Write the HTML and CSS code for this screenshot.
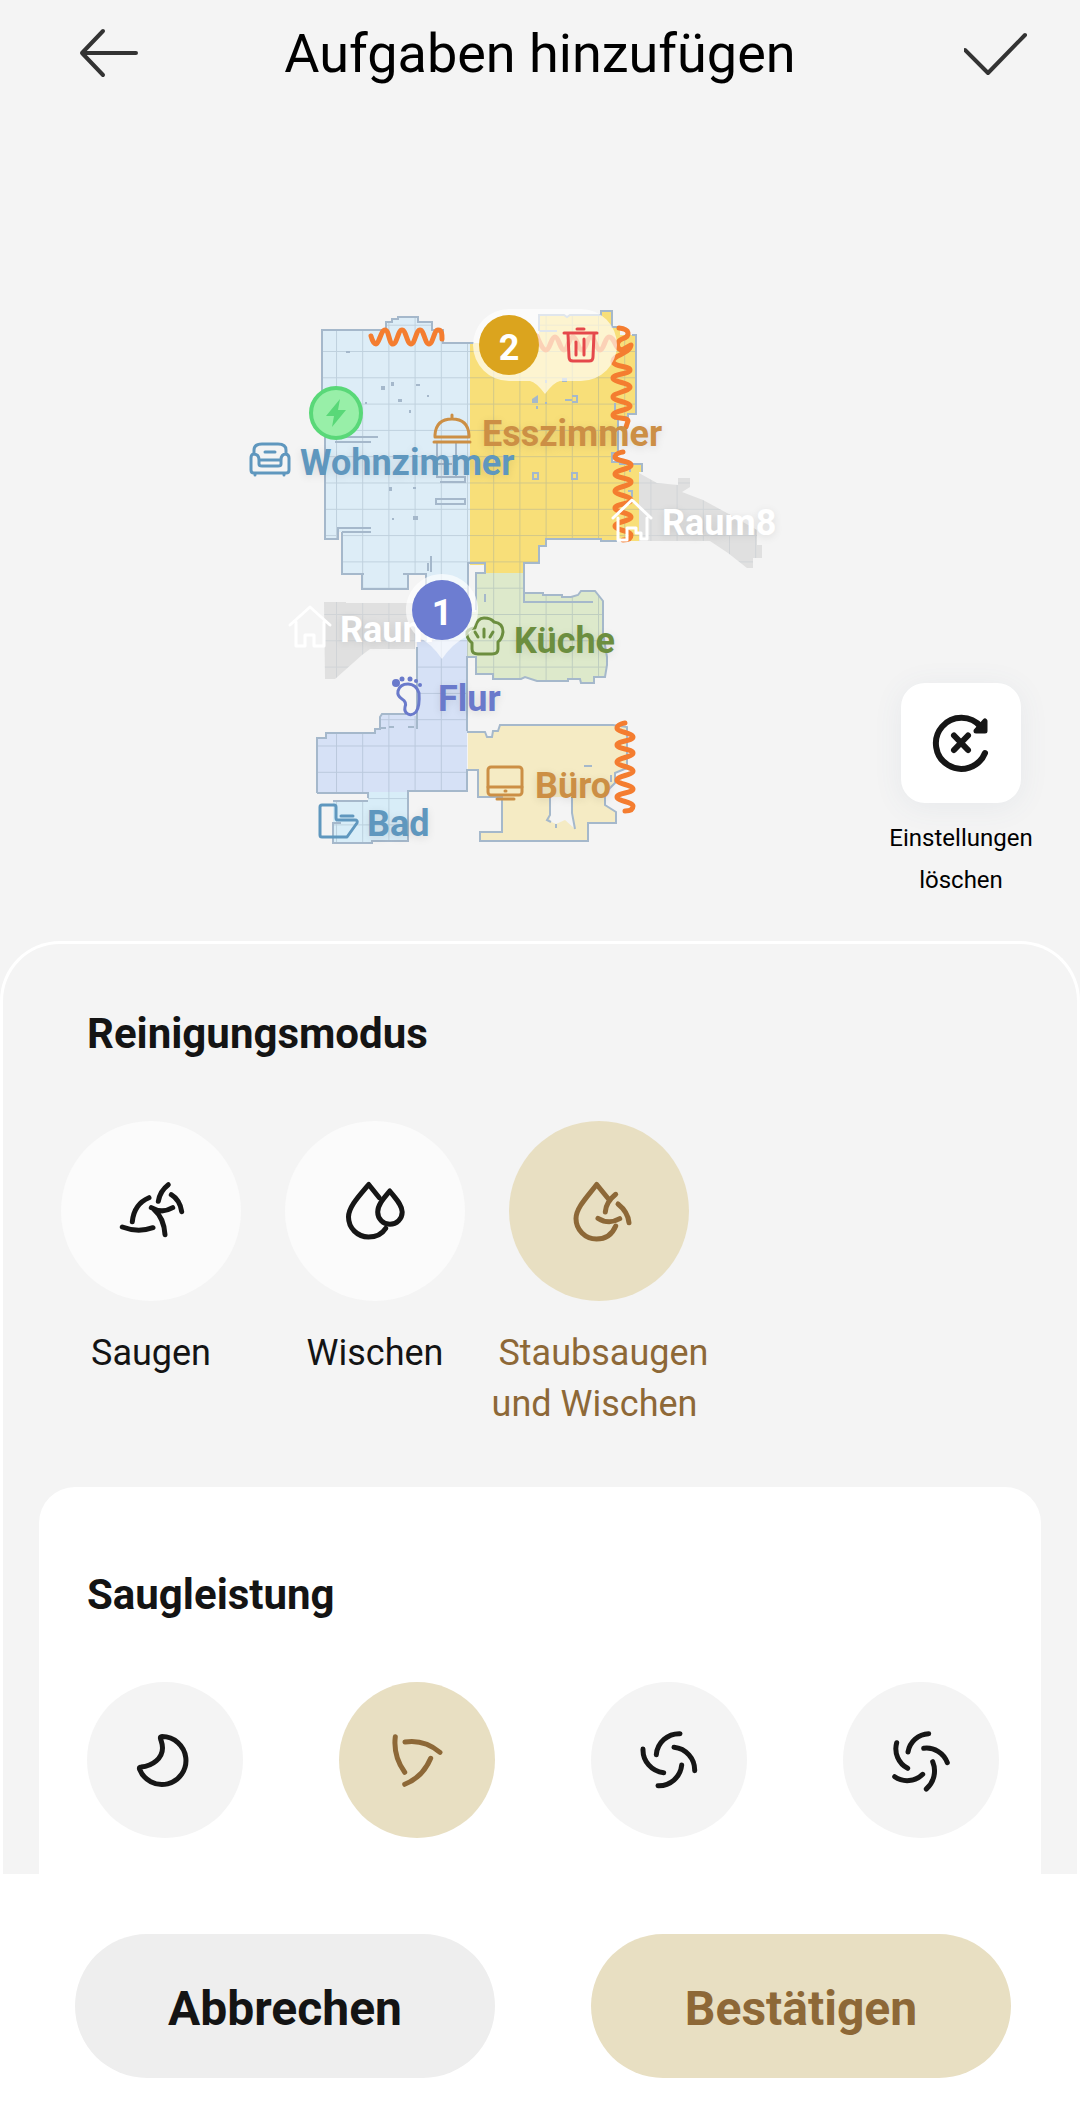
FILE: index.html
```html
<!DOCTYPE html>
<html lang="de">
<head>
  <meta charset="UTF-8" />
  <meta name="viewport" content="width=device-width, initial-scale=1" />
  <title>Aufgaben hinzufügen</title>
  <link rel="stylesheet" href="styles.css">
</head>
<body>

  <header class="topbar">
    <button class="icon-btn" aria-label="Zurück">
      <svg width="64" height="56" viewBox="0 0 64 56"><path d="M58 27H4M25 5L4 27l21 22" /></svg>
    </button>
    <h1>Aufgaben hinzufügen</h1>
    <button class="icon-btn" aria-label="Fertig">
      <svg width="64" height="56" viewBox="0 0 64 56"><path d="M1 24l23 23L61 9" /></svg>
    </button>
  </header>

  <main>
    <section class="map-area">
      <svg class="map" viewBox="240 290 600 580" role="img" aria-label="Karte">
        <defs>
          <pattern id="grid" x="336" y="351" width="26.2" height="26.3" patternUnits="userSpaceOnUse">
            <path d="M0 .5H27M.5 0V27" stroke="#8095a8" stroke-opacity=".32" fill="none" />
          </pattern>
          <path id="wohn" d="M322 330H386V322H392V319H398V317H418V322H432V330H443V343H470V563H468V645H426V574H408V589H362V574H342V532H338V539H325V437L322 395Z" />
          <path id="ess" d="M470 343H539V315H564L567 317L570 315H601V311H612V327H620V335H636V414H628V417H618V453H612V462H620V464H642V472H639V541H601V539H546V546H539V563H524V573H486V565H470Z" />
          <path id="kueche" d="M476 573H524V593H543V595H562V597H571L578 595L581 591H595L603 601V633L607 657V665L605 677H594V683H581L580 679H568V681H537L525 677L521 679H493V674H476V657H467V612H476Z" />
          <path id="flur" d="M417 640H467V791H408V792H368V793H317V738H326V733H375V729H380V717L382 714H408L417 716Z" />
          <path id="bad" d="M368 792H408V841H372V843H333V801H368Z" />
          <path id="buero" d="M468 732H485L487 737H492L493 731H498L500 725H613L627 727V768L615 773V783L605 793V805L616 812V823H588V841H480V832H502V797H478V770H468Z" />
          <path id="raum7" d="M324 602H346V603H415V649H370L362 655L335 679H325Z" />
          <path id="raum8" d="M639 473L657 483L678 485V478H690V487L682 492L703 500L727 513L757 530V545H762V558H753V568H747L728 553L710 541H617V530Z" />
        </defs>

        <!-- rooms -->
        <use href="#raum7" fill="#e0e0e0" /><use href="#raum7" fill="url(#grid)" opacity=".5" />
        <use href="#raum8" fill="#e0e0e0" /><use href="#raum8" fill="url(#grid)" opacity=".5" />
        <use href="#wohn" fill="#ddedf7" /><use href="#wohn" fill="url(#grid)" />
        <use href="#ess" fill="#f8df79" /><use href="#ess" fill="url(#grid)" />
        <use href="#kueche" fill="#dde9cb" /><use href="#kueche" fill="url(#grid)" />
        <use href="#bad" fill="#d8edf8" /><use href="#bad" fill="url(#grid)" />
        <use href="#flur" fill="#d6e1f6" /><use href="#flur" fill="url(#grid)" />
        <use href="#buero" fill="#f5ebc4" />

        <!-- walls -->
        <g class="walls">
          <path d="M322 398V330H386V322H392V319H398V317H418V322H432V330H443V343H474" />
          <path d="M325 437V539H338V528H371M342 532H371M342 532V574H364M362 574V589H408V574H403M408 574H426V592" />
          <path d="M539 331V315H564L567 317L570 315H601V311H612V327H620M632 335H636V414H628V417H618V453H612V462H620V464H642V472" />
          <path d="M617 541H601V539H546V546H539V563H524V602H593M524 593H543V595H562V597H571L578 595L581 591H595L603 601V633L607 657V665L605 677H594V683H581L580 679H568V681H537L525 677L521 679H493V674H476V657H467V731" />
          <path d="M468 600V563H485V573H476V610M485 594V602" />
          <path d="M417 647V729M408 727H414M317 793V738H326V733H375V729H380V717L382 714H406M317 793H368V798M467 769V791H408V841H372V843H333V823H341M333 801H368" />
          <path d="M467 732H485L487 737H492L493 731H498L500 725H613L627 727V768L615 773V783L605 793V805L616 812V823H588V841H480V832H502V797H478V770H467" />
          <path d="M540 331H557M335 437H378M335 442H371" />
          <path d="M437 443V477H465V482H440M456 443V477M437 464H452M436 499H465V504H436ZM431 556V572M428 563V571" />
          <path d="M533 473H538V479H533ZM572 473H577V479H572ZM572 396H577V402H572M565 400H572M615 403V420M630 465V472M628 491H632V497" />
          <path d="M380 728H386M389 727H394M584 766H592M611 775V782" />
        </g>
        <path d="M550 797H572L573 813L575 829L565 820L556 824L547 820H550Z" fill="#f4f4f4" />
        <path d="M550 797V815L547 820L551 822M572 797V813L575 829M556 824V828" class="walls" />
        <g fill="#a5b8cb">
          <path d="M346 351h4v2h-4zM381 386h4v4h-4zM387 386h4v-4h3v4h-2zM416 384h4v2h-4zM398 399h4v3h-4zM427 395h2v2h-2zM409 410h2v3h-2zM365 402h2v2h-2zM389 487h3v4h-3zM413 487h3v2h-3zM392 518h2v2h-2zM413 516h5v4h-5z" />
          <path d="M532 399l6-4v8h-6zM536 406h2v3h-2zM562 378h5v4h-5zM545 380h2v3h-2zM545 402h2v2h-2z" />
        </g>

        <!-- carpets / curtains -->
        <g class="zigzag">
          <path d="M371 336S373 344 376 344S381 330 385 330S389 344 393 344S398 330 402 330S407 344 411 344S416 330 420 330S425 344 429 344S434 330 438 330S442 334 442 339" />
          <path d="M537 336S542 350 546 350S551 337 555 337S560 350 564 350S569 337 573 337S578 350 582 350S587 337 591 337S596 350 600 350S605 337 609 337S614 342 617 347" />
          <path d="M619 328C630 329 631 336 622 339C615 342 617 350 622 350L631 345C630 354 613 355 613 361S630 366 630 370S613 374 613 378S630 383 630 387S613 393 613 397S630 402 630 406S613 411 613 415S628 417 628 421L626 427" />
          <path d="M623 452S615 453 615 457S631 461 631 465S615 470 615 474S631 478 631 482S615 487 615 491S631 496 631 500S615 504 615 508S631 513 631 517S615 522 615 526S631 531 631 535S627 540 623 540" />
          <path d="M625 723S617 724 617 728S633 733 633 737S617 741 617 745S633 749 633 753S617 758 617 762S633 767 633 771S617 776 617 780S633 785 633 789S617 793 617 797S633 802 633 806S629 811 625 811" />
        </g>

        <!-- charging dock -->
        <circle cx="336" cy="413" r="25" fill="#98efa8" stroke="#59d878" stroke-width="4" />
        <path d="M340 399l-14 17h8l-2 11 14-17h-8z" fill="#59d878" />

        <!-- room icons -->
        <g class="room-icon blue">
          <path d="M254 454V450Q254 444 262 444H278Q286 444 286 450V454M259 460Q259 454 253 454Q251 455 251 458V470Q251 473 254 473H286Q289 473 289 470V458Q289 455 286 454Q281 454 281 460V464Q281 466 278 466H262Q259 466 259 464ZM265 452H275M260 460H280M255 473V475M284 473V475" />
          <path d="M334 805H322Q320 805 320 807V835Q320 837 322 837H347L357 823Q358 820 355 820H338Q336 820 336 818V807Q336 805 334 805ZM341 816H353" />
        </g>
        <g class="room-icon brass">
          <path d="M435 437V435Q436 419 452 419T469 435V437ZM434 442H470M452 419V415" />
          <rect x="488" y="767" width="34" height="28" rx="3" />
          <path d="M488 787H522M497 799H514M505 791H506" />
        </g>
        <g class="room-icon green">
          <path d="M472 643Q466 638 467 632Q470 628 475 628Q477 618 484 618Q491 618 494 622Q503 623 503 632Q502 639 498 642V649Q498 654 492 654H478Q472 654 472 649ZM484 629V637M475 632L478 637M493 632L490 637" />
        </g>
        <g class="room-icon violet">
          <path d="M408 684Q416 684 419 693Q420 706 416 712Q412 716 408 714Q404 712 405 707Q407 702 402 699Q397 696 398 691Q400 684 408 684Z" />
          <g fill="#6a7acb" stroke="none"><circle cx="396" cy="683" r="4" /><circle cx="402" cy="679" r="2.5" /><circle cx="410" cy="679" r="2.5" /><circle cx="416" cy="681" r="2" /><circle cx="420" cy="685" r="2" /></g>
        </g>
        <g class="room-icon white">
          <path d="M290 625L310 607L330 625M296 622V646H305V635H314V646H324V622" />
          <path d="M613 518L632 500L651 518M618 518V540H627V528H636V533H641V539H647V518" />
        </g>

        <!-- room names -->
        <g class="room-name">
          <text x="300" y="475" fill="#5f97be">Wohnzimmer</text>
          <text x="482" y="446" fill="#cc8f45">Esszimmer</text>
          <text x="662" y="535" fill="#fff">Raum8</text>
          <text x="340" y="642" fill="#fff">Raum</text>
          <text x="514" y="653" fill="#6c8e3f">Küche</text>
          <text x="438" y="711" fill="#6a7acb">Flur</text>
          <text x="535" y="798" fill="#cc8f45">Büro</text>
          <text x="367" y="836" fill="#5f97be">Bad</text>
        </g>

        <!-- order markers -->
        <path class="bubble" d="M509 309H581A36 36 0 0 1 581 381H560Q554 382 545 394Q536 382 530 381H509A36 36 0 0 1 509 309Z" />
        <circle cx="509" cy="345" r="30" fill="#dba41e" />
        <path class="trash" d="M564 333H597M577 329H584M568 334L569 357Q569 361 573 361H589Q593 361 593 357L594 334M576 342V355M584 339V355" />
        <path class="bubble" d="M442 574A36 36 0 0 1 467 636Q452 644 442 659Q432 644 417 636A36 36 0 0 1 442 574Z" />
        <circle cx="442" cy="610" r="30" fill="#6d7dd1" />
        <g class="marker-text">
          <text x="509" y="360">2</text>
          <text x="442" y="625">1</text>
        </g>
      </svg>

      <div class="clear">
        <button class="clear-btn" id="clear" aria-labelledby="clearLabel">
          <svg width="72" height="72" viewBox="0 0 72 72">
            <path d="M60 46A25.500 25.500 0 1 1 56 20" />
            <path d="M60 14V24H51Z" fill="#161616" stroke-width="5" />
            <path d="M29 28.500L43 43M43 28.500L29 43" />
          </svg>
        </button>
        <label id="clearLabel" for="clear">Einstellungen löschen</label>
      </div>
    </section>

    <section class="panel">
      <h2>Reinigungsmodus</h2>
      <div class="modes">
        <button class="mode">
          <span class="disc">
            <svg width="72" height="72" viewBox="0 0 72 72"><path d="M53.300 9.700Q45 16 43.300 26.300M56.300 19.700Q65 25 66.700 36.700M34 22.700Q19 29 17.300 46.700M7.300 52Q23 58 38 52.700M36.300 32.700Q47 39 57.700 32.700M38.700 34Q49 43 50 59.700" /></svg>
          </span>
          Saugen
        </button>
        <button class="mode">
          <span class="disc">
            <svg width="72" height="72" viewBox="0 0 72 72"><path d="M40.300 22.700L29.700 9.500C20 21 9.500 32 9.500 42A20 20 0 0 0 29.500 62C37 62 43 59 46.700 53.300" /><path d="M50.700 16C44 24 38.700 30 38.700 37A12.200 12.200 0 0 0 63.200 37C63.200 30 57 24 50.700 16Z" /></svg>
          </span>
          Wischen
        </button>
        <button class="mode active">
          <span class="disc">
            <svg width="72" height="72" viewBox="0 0 72 72"><path d="M52.700 51C49 60 42 64 33.500 64A20.500 20.500 0 0 1 13 43.500C13 33 24 22 33.700 9.500L46.300 25M52.700 19.300Q43 27 42.300 37M55 29Q65 37 66 47.700M35 43.300Q46 50 56.700 43.700" /></svg>
          </span>
          &nbsp;Staubsaugen<br>und Wischen&nbsp;
        </button>
      </div>

      <div class="card">
        <h2>Saugleistung</h2>
        <div class="levels">
          <button class="level" aria-label="Leise">
            <svg width="72" height="72" viewBox="0 0 72 72"><path d="M31.500 14.500Q31 12.500 33 12.500A24 24 0 1 1 10.500 45Q10 43 12 43C24 42 33.500 34 33.500 24C33.500 19 32 17 31.500 14.500Z" /></svg>
          </button>
          <button class="level active" aria-label="Standard">
            <svg width="72" height="72" viewBox="0 0 72 72"><path d="M14.300 12.700Q12 32 23.700 48.300M24 18Q43 15 59 28.300M49.700 34.300Q42 53 23.700 60.300" /></svg>
          </button>
          <button class="level" aria-label="Stark">
            <svg width="72" height="72" viewBox="0 0 72 72"><path d="M10 25A23 23 0 0 0 30.700 48.700M23.300 30.700A23 23 0 0 1 47 9.700M41 23.300A23 23 0 0 1 61.700 46.700M48.700 41A23 23 0 0 1 25 61.700" /></svg>
          </button>
          <button class="level" aria-label="Maximal">
            <svg width="72" height="72" viewBox="0 0 72 72"><path d="M11.700 18.700A22 22 0 0 0 22.700 44.300M23 28A22 22 0 0 1 43.700 9.700M38.700 24.300A22 22 0 0 1 62.300 38.700M47.700 37.700A24 24 0 0 1 41.300 65M37.700 50.300A22 22 0 0 1 9.700 52.700" /></svg>
          </button>
        </div>
      </div>
    </section>
  </main>

  <footer class="actions">
    <button class="action">Abbrechen</button>
    <button class="action primary">Bestätigen</button>
  </footer>

</body>
</html>
```
FILE: styles.css
```css
* {
  box-sizing: border-box;
}

body {
  margin: 0;
  min-height: 100vh;
  display: flex;
  flex-direction: column;
  background: #fff;
  color: #141414;
  font-family: Roboto, "Noto Sans", sans-serif;
}

button {
  border: none;
  padding: 0;
  background: none;
  color: inherit;
  font: inherit;
  cursor: pointer;
}

svg {
  display: block;
  fill: none;
  stroke-linecap: round;
  stroke-linejoin: round;
}

h2 {
  margin: 0;
  font-size: 42px;
  line-height: 50px;
  font-weight: 700;
}

.topbar {
  display: grid;
  grid-template-columns: 1fr auto 1fr;
  align-items: center;
  height: 108px;
  padding: 0 52px 0 78px;
  background: #f4f4f4;
}

.topbar {
  padding: 0 52px;
}

.topbar h1 {
  margin: 0;
  color: #000;
  font-size: 54px;
  line-height: 64px;
  font-weight: 400;
}

.icon-btn {
  justify-self: start;
  margin-left: 26px;
}

.icon-btn:last-child {
  justify-self: end;
}

.icon-btn svg {
  stroke: #333;
  stroke-width: 4;
}

main {
  flex: 1;
  display: flex;
  flex-direction: column;
  background: #f4f4f4;
}

/* map */
.map-area {
  position: relative;
  padding: 182px 0 71px;
}

.map {
  width: 600px;
  max-width: 100%;
  margin: 0 auto;
}

.walls {
  stroke: #a5b8cb;
  stroke-width: 2;
  stroke-linecap: butt;
  stroke-linejoin: miter;
}

.zigzag {
  stroke: #f47d30;
  stroke-width: 5;
}

.room-icon {
  stroke-width: 3;
}

.blue { stroke: #5f97be; }
.brass { stroke: #cc8f45; }
.green { stroke: #6c8e3f; }
.violet { stroke: #6a7acb; }
.white { stroke: #fff; }

.room-name {
  font-size: 36px;
  font-weight: 700;
  text-shadow: 0 2px 8px rgba(0, 0, 0, .1);
}

.bubble {
  fill: #fff;
  fill-opacity: .65;
}

.trash {
  stroke: #e5484b;
  stroke-width: 3;
}

.marker-text {
  fill: #fff;
  font-size: 36px;
  font-weight: 700;
  text-anchor: middle;
}

.clear {
  position: absolute;
  right: 39px;
  bottom: 40px;
  width: 160px;
  display: flex;
  flex-direction: column;
  align-items: center;
  gap: 14px;
  color: #000;
  font-size: 24px;
  line-height: 42px;
  text-align: center;
}

.clear-btn {
  display: grid;
  place-items: center;
  width: 120px;
  height: 120px;
  border-radius: 24px;
  background: #fff;
  box-shadow: 0 4px 30px rgba(80, 100, 140, .08);
}

.clear-btn svg {
  stroke: #161616;
  stroke-width: 6;
}

/* settings panel */
.panel {
  flex: 1;
  display: flex;
  flex-direction: column;
  padding: 65px 36px 0;
  border: 3px solid #fff;
  border-bottom: 0;
  border-radius: 60px 60px 0 0;
}

.panel > h2 {
  padding-left: 48px;
}

.modes {
  display: flex;
  padding-top: 62px;
}

.mode {
  display: flex;
  flex-direction: column;
  align-items: center;
  width: 224px;
  font-size: 36px;
  line-height: 51px;
}

.disc {
  display: grid;
  place-items: center;
  width: 180px;
  height: 180px;
  margin-bottom: 27px;
  border-radius: 50%;
  background: #fbfbfb;
}

.disc svg,
.level svg {
  stroke: #161616;
  stroke-width: 5;
}

.active {
  color: #8d6837;
}

.active .disc,
.level.active {
  background: #e8dfc2;
}

.mode.active svg,
.level.active svg {
  stroke: #8d6837;
}

.card {
  flex: 1;
  margin-top: 57px;
  padding: 83px 42px 36px 48px;
  border-radius: 36px 36px 0 0;
  background: #fff;
}

.levels {
  display: flex;
  justify-content: space-between;
  padding-top: 62px;
}

.level {
  display: grid;
  place-items: center;
  width: 156px;
  height: 156px;
  border-radius: 50%;
  background: #f4f4f4;
}

/* bottom buttons */
.actions {
  display: flex;
  gap: 96px;
  padding: 60px 69px 50px 75px;
}

.action {
  flex: 1;
  height: 144px;
  padding-top: 4px;
  border-radius: 72px;
  background: #eee;
  font-size: 48px;
  font-weight: 700;
}

.primary {
  background: #e8dfc2;
  color: #8d6837;
}
```
